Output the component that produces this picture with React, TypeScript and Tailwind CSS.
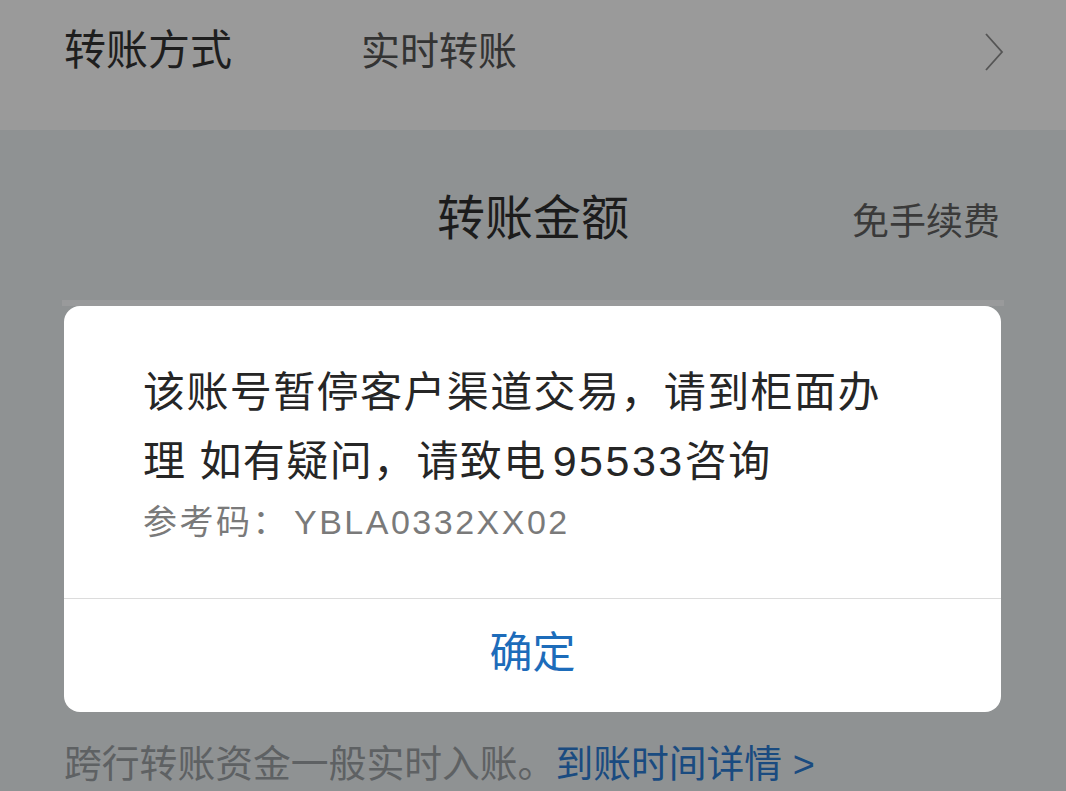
export default function App() {
  return (
    <div
      className="w-[1066px] h-[791px] overflow-hidden bg-[#8f9293] flex flex-col"
      style={{ fontFamily: '"Liberation Sans", "Noto Sans CJK SC", sans-serif' }}
    >
      {/* Transfer method row */}
      <div className="h-[130px] shrink-0 bg-[#9a9a9a] flex items-center pl-[64px] pr-[62px]">
        <span className="w-[297px] text-[42px] leading-none text-[#1e1e1e] -mt-[28px]">转账方式</span>
        <span className="flex-1 text-[39px] leading-none text-[#333] -mt-[28px]">实时转账</span>
        <svg width="20" height="38" viewBox="0 0 20 38" className="-mt-[26px]">
          <polyline points="2,1 18,19 2,37" fill="none" stroke="#555" strokeWidth="1.8" />
        </svg>
      </div>

      {/* Amount heading */}
      <div className="h-[170px] shrink-0 relative flex items-center justify-center">
        <span className="text-[48px] leading-none text-[#1c1c1c] mt-[8px]">转账金额</span>
        <span className="absolute right-[66px] top-[74px] text-[37px] leading-none text-[#3a3a3a]">免手续费</span>
      </div>

      {/* Dimmed input card peeking above the dialog */}
      <div className="mx-[62px] h-[6px] shrink-0 bg-[#999a9b]" />

      {/* Dialog */}
      <div className="mx-[64px] w-[937px] h-[406px] shrink-0 bg-white rounded-[16px] flex flex-col">
        <div className="flex-1 pl-[79px] pr-[40px] pt-[52px]">
          <p className="text-[42px] leading-[69px] tracking-[1.4px] text-[#262626]">
            该账号暂停客户渠道交易，请到柜面办
            <br />
            理 如有疑问，请致电
            <span className="ml-[6px] text-[43px] tracking-[2.5px]">95533</span>
            咨询
          </p>
          <p className="mt-[4px] text-[34px] leading-[44px] tracking-[2.5px] text-[#7a7a7a]">
            参考码：<span className="ml-[5px]">YBLA0332XX02</span>
          </p>
        </div>
        <div className="h-[114px] border-t border-[#dcdcdc] flex items-center justify-center">
          <span className="text-[43px] leading-none text-[#1d6cba] -mt-[4px]">确定</span>
        </div>
      </div>

      {/* Bottom note */}
      <div className="pl-[64px] pt-[34px] text-[37.8px] leading-none whitespace-nowrap">
        <span className="text-[#5e6163]">跨行转账资金一般实时入账。</span>
        <span className="text-[#1a4b80]">到账时间详情 &gt;</span>
      </div>
    </div>
  )
}
